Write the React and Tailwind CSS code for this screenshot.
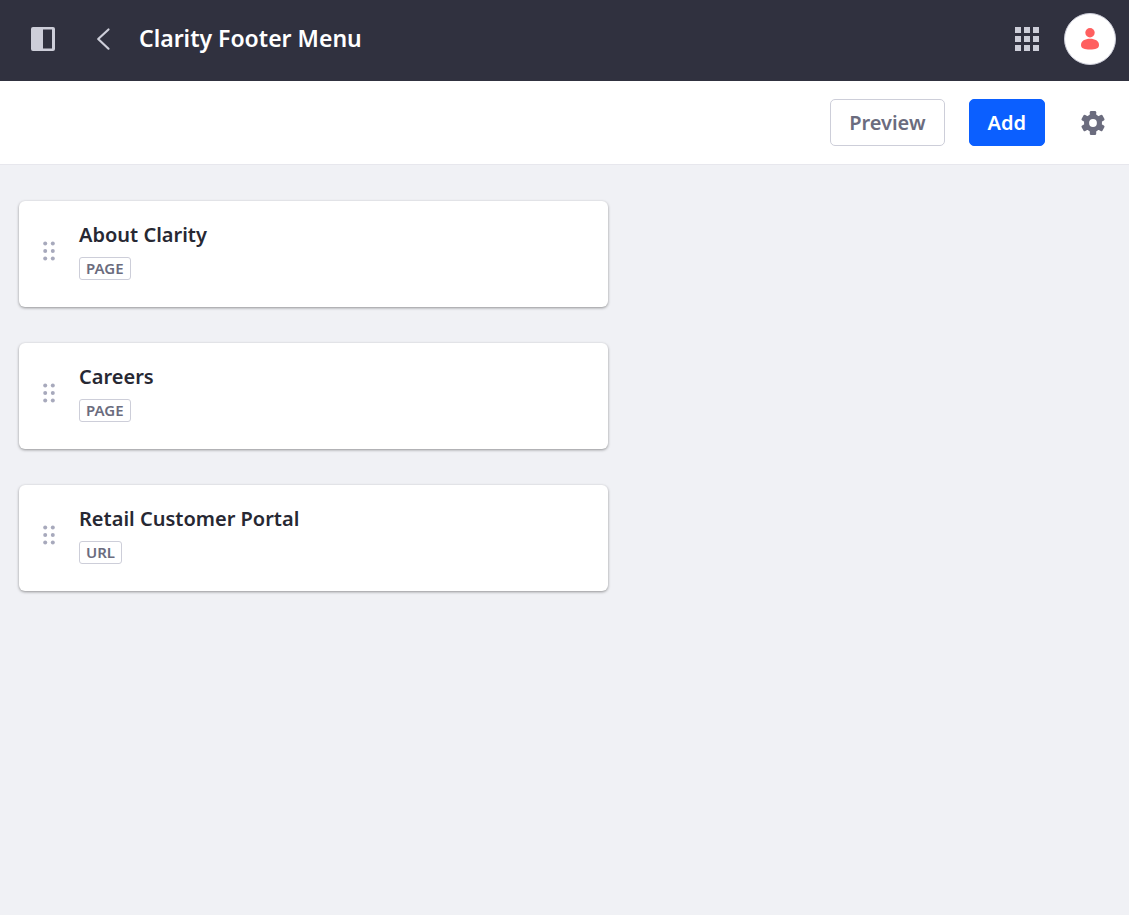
import React from "react";

const items = [
  { title: "About Clarity", type: "PAGE" },
  { title: "Careers", type: "PAGE" },
  { title: "Retail Customer Portal", type: "URL" },
];

function PanelIcon() {
  return (
    <svg viewBox="0 0 24 24" className="size-6" aria-hidden="true">
      <path
        fill="currentColor"
        fillRule="evenodd"
        d="M2 0h20a2 2 0 0 1 2 2v20a2 2 0 0 1-2 2H2a2 2 0 0 1-2-2V2a2 2 0 0 1 2-2Zm10 2.500v19h9v-19Z"
      />
    </svg>
  );
}

function BackIcon() {
  return (
    <svg viewBox="0 0 24 24" className="size-6" aria-hidden="true">
      <path
        d="M17.500 2.500 7.200 12l10.300 9.700"
        fill="none"
        stroke="currentColor"
        strokeWidth="2.200"
        strokeLinecap="round"
        strokeLinejoin="round"
      />
    </svg>
  );
}

function GridIcon() {
  return (
    <svg viewBox="0 0 24 24" className="size-6" fill="currentColor" aria-hidden="true">
      {[0, 9, 18].map((y) =>
        [0, 9, 18].map((x) => <rect key={`${x}-${y}`} x={x} y={y} width="6" height="6" />)
      )}
    </svg>
  );
}

function UserIcon() {
  return (
    <svg viewBox="0 0 18 22" className="h-[22px] w-[18px]" fill="currentColor" aria-hidden="true">
      <circle cx="9" cy="4.800" r="4.700" />
      <path d="M0 17c0-4 4-6.200 9-6.200s9 2.200 9 6.200c0 3.500-3.500 4.600-9 4.600S0 20.500 0 17Z" />
    </svg>
  );
}

function GearIcon() {
  return (
    <svg viewBox="0 0 24 24" className="size-6" fill="currentColor" aria-hidden="true">
      {[0, 60, 120].map((angle) => (
        <rect
          key={angle}
          x="8.800"
          y="0"
          width="6.400"
          height="24"
          rx="1.300"
          transform={`rotate(${angle} 12 12)`}
        />
      ))}
      <circle cx="12" cy="12" r="9" />
      <circle cx="12" cy="12" r="3.900" fill="white" />
    </svg>
  );
}

function DragIcon() {
  return (
    <svg viewBox="0 0 12 20" className="h-5 w-3" fill="currentColor" aria-hidden="true">
      {[2.5, 10, 17.5].map((y) =>
        [2.2, 9.8].map((x) => <circle key={`${x}-${y}`} cx={x} cy={y} r="2" />)
      )}
    </svg>
  );
}

function MenuItem({ title, type }) {
  return (
    <li className="flex items-center rounded-md bg-white px-6 pt-5 pb-[27px] shadow-[0_1px_3px_rgba(0,0,0,0.4)]">
      <button type="button" aria-label={`Move ${title}`} className="mr-6 text-[#a7a9bc]">
        <DragIcon />
      </button>
      <div className="flex min-w-0 flex-col items-start gap-2">
        <h2 className="text-[20px] leading-7 font-semibold text-[#272833]">{title}</h2>
        <span className="rounded-[3px] border border-[#cdced9] px-1.5 pb-px text-[15px] leading-5 font-semibold text-[#6b6c7e]">
          {type}
        </span>
      </div>
    </li>
  );
}

export default function App() {
  return (
    <div className="min-h-screen bg-[#f0f1f5] font-['Noto_Sans',sans-serif]">
      <header className="flex items-center bg-[#30313f] pt-[13px] pr-[13px] pb-4 pl-[31px] text-[#cdced9]">
        <button type="button" aria-label="Toggle product menu">
          <PanelIcon />
        </button>
        <a href="#back" aria-label="Back" className="ml-9">
          <BackIcon />
        </a>
        <h1 className="ml-6 pb-0.5 text-[23px] leading-[30px] font-semibold text-white">
          Clarity Footer Menu
        </h1>
        <button type="button" aria-label="Applications" className="ml-auto">
          <GridIcon />
        </button>
        <button
          type="button"
          aria-label="User profile"
          className="ml-[25px] flex size-[52px] items-center justify-center rounded-full border border-[#cdced9] bg-white text-[#ff5f5f]"
        >
          <UserIcon />
        </button>
      </header>
      <div className="flex items-center justify-end gap-6 border-b border-[#e7e7ed] bg-white py-[18px] pr-6">
        <button
          type="button"
          className="rounded-[5px] border border-[#cdced9] px-[18px] py-2 text-[20px] leading-[29px] font-semibold text-[#6b6c7e]"
        >
          Preview
        </button>
        <button
          type="button"
          className="rounded-[5px] border border-[#0b5fff] bg-[#0b5fff] px-[18px] py-2 text-[20px] leading-[29px] font-semibold text-white"
        >
          Add
        </button>
        <button type="button" aria-label="Settings" className="ml-3 text-[#6b6c7e]">
          <GearIcon />
        </button>
      </div>
      <main className="px-[19px] py-9">
        <ul className="flex max-w-[589px] flex-col gap-9">
          {items.map((item) => (
            <MenuItem key={item.title} {...item} />
          ))}
        </ul>
      </main>
    </div>
  );
}
